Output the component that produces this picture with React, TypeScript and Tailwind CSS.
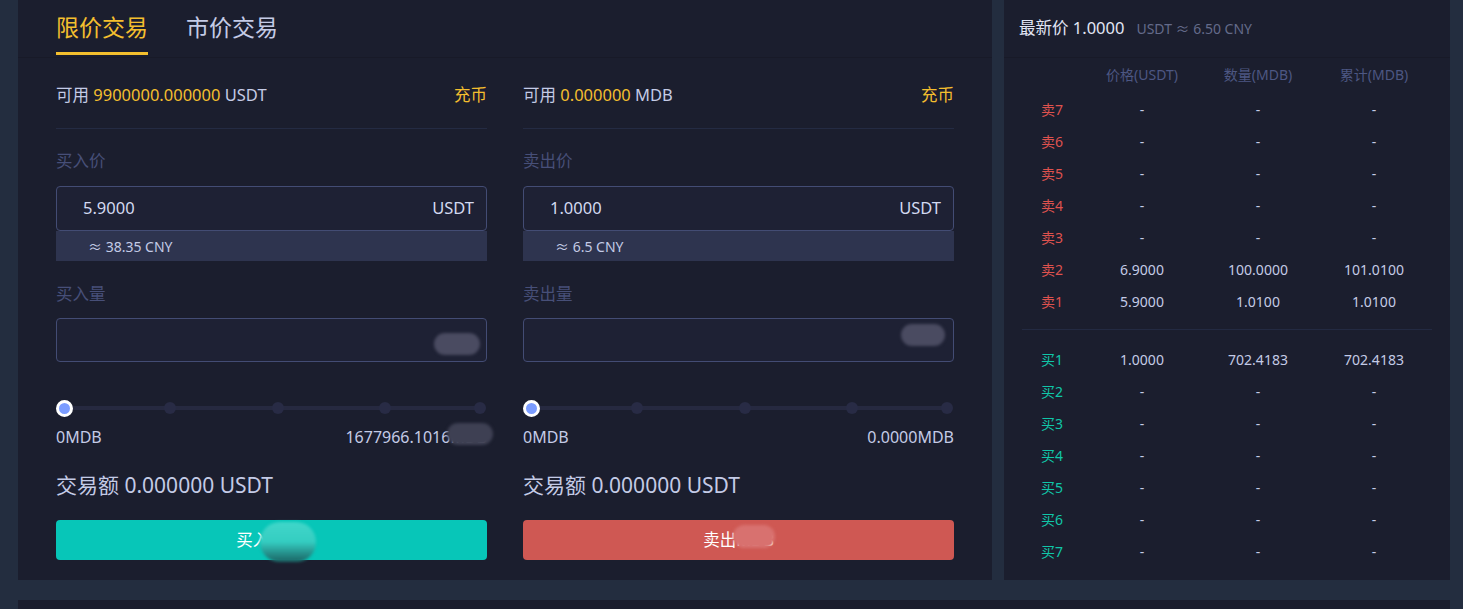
import React from 'react';

const sellRows = [
  { n: 7, price: '-', amount: '-', total: '-' },
  { n: 6, price: '-', amount: '-', total: '-' },
  { n: 5, price: '-', amount: '-', total: '-' },
  { n: 4, price: '-', amount: '-', total: '-' },
  { n: 3, price: '-', amount: '-', total: '-' },
  { n: 2, price: '6.9000', amount: '100.0000', total: '101.0100' },
  { n: 1, price: '5.9000', amount: '1.0100', total: '1.0100' },
];

const buyRows = [
  { n: 1, price: '1.0000', amount: '702.4183', total: '702.4183' },
  { n: 2, price: '-', amount: '-', total: '-' },
  { n: 3, price: '-', amount: '-', total: '-' },
  { n: 4, price: '-', amount: '-', total: '-' },
  { n: 5, price: '-', amount: '-', total: '-' },
  { n: 6, price: '-', amount: '-', total: '-' },
  { n: 7, price: '-', amount: '-', total: '-' },
];

// mosaic blur left over in the screenshot
function Blob({ className }: { className: string }) {
  return <div className={`absolute rounded-full blur-[1.5px] ${className}`} />;
}

function Slider() {
  return (
    <div className="relative h-[16px]">
      <div className="absolute left-[8px] right-[7px] top-[6px] h-[4px] bg-[#262940]" />
      <div className="absolute left-[25%] top-[2px] w-[12px] h-[12px] rounded-full bg-[#282b45]" />
      <div className="absolute left-[50%] top-[2px] w-[12px] h-[12px] rounded-full bg-[#282b45]" />
      <div className="absolute left-[75%] top-[2px] w-[12px] h-[12px] rounded-full bg-[#282b45]" />
      <div className="absolute right-[1px] top-[2px] w-[12px] h-[12px] rounded-full bg-[#282b45]" />
      <div className="absolute left-0 top-0 w-[17px] h-[17px] rounded-full border-[3px] border-white bg-[#7b9cff]" />
    </div>
  );
}

type SideProps = {
  balance: string;
  unit: string;
  priceLabel: string;
  price: string;
  cny: string;
  amountLabel: string;
  max: string;
  buy: boolean;
};

function TradeSide({ balance, unit, priceLabel, price, cny, amountLabel, max, buy }: SideProps) {
  return (
    <div className="flex flex-col">
      <div className="flex justify-between pt-[26px] pb-[22px] border-b border-[#242b43] text-[16.5px] leading-[22px]">
        <div className="text-[#c4cbe6]">
          可用 <span className="text-[#f4bf2e]">{balance}</span> {unit}
        </div>
        <div className="text-[#f4bf2e]">充币</div>
      </div>

      <div className="mt-[21px] text-[16.5px] leading-[22px] text-[#474f78]">{priceLabel}</div>
      <div className="mt-[14px] h-[45px] flex items-center justify-between pl-[26px] pr-[12px] rounded-[4px] border border-[#434c74] bg-[#1e2134] text-[16.5px] text-[#d3d9f0]">
        <span>{price}</span>
        <span>USDT</span>
      </div>
      <div className="h-[30px] flex items-center pl-[32px] bg-[#2e344f] text-[14px] text-[#c4cbe6]">≈ {cny} CNY</div>

      <div className="mt-[22px] text-[16.5px] leading-[22px] text-[#474f78]">{amountLabel}</div>
      <div className="relative mt-[13px] h-[44px] rounded-[4px] border border-[#434c74] bg-[#1e2134]">
        <Blob className={buy ? 'right-[6px] top-[14px] w-[46px] h-[22px] bg-[#4a4b61]' : 'right-[8px] top-[5px] w-[44px] h-[22px] bg-[#4a4b61]'} />
      </div>

      <div className="mt-[38px]">
        <Slider />
      </div>
      <div className="relative mt-[10px] flex justify-between text-[16px] leading-[22px] text-[#c4cbe6]">
        <span>0MDB</span>
        <span>{max}</span>
        {buy && <Blob className="-right-[6px] top-[-3px] w-[46px] h-[22px] bg-[#3e4053]" />}
      </div>

      <div className="mt-[23px] text-[21px] leading-[28px] text-[#c4cbe6]">交易额 0.000000 USDT</div>

      <div
        className={`relative mt-[21px] h-[40px] rounded-[4px] flex items-center justify-center text-[16.5px] text-white ${
          buy ? 'bg-[#07c6b8]' : 'bg-[#cf5853]'
        }`}
      >
        {buy ? '买入MDB' : '卖出MDB'}
        {buy ? (
          <Blob className="left-[204px] top-[2px] w-[56px] h-[40px] bg-gradient-to-b from-[#40d6c9] via-[#34cdc1] to-[#1a6464]" />
        ) : (
          <Blob className="left-[210px] top-[5px] w-[42px] h-[23px] bg-[#d8716f]" />
        )}
      </div>
    </div>
  );
}

function BookRow({ label, color, price, amount, total }: { label: string; color: string; price: string; amount: string; total: string }) {
  return (
    <div className="grid grid-cols-[62px_116px_116px_116px] h-[32px] items-center text-[14px]">
      <span className={`pl-[19px] ${color}`}>{label}</span>
      <span className="text-center text-[#c4cbe6]">{price}</span>
      <span className="text-center text-[#c4cbe6]">{amount}</span>
      <span className="text-center text-[#c4cbe6]">{total}</span>
    </div>
  );
}

export default function App() {
  return (
    <div className="w-[1463px] h-[609px] overflow-hidden bg-[#232d3f] pl-[18px] pr-[13px] font-['Noto_Sans','Noto_Sans_CJK_SC',sans-serif]">
      <div className="flex gap-[12px] h-[580px]">
        <div className="flex-1 bg-[#1b1e2e] flex flex-col">
          <div className="h-[58px] flex items-end gap-[38px] px-[38px] pb-[2px] border-b border-[#181a28]">
            <div className="flex flex-col">
              <span className="text-[23px] leading-[30px] text-[#f4bf2e]">限价交易</span>
              <div className="mt-[10px] h-[3px] bg-[#f4bf2e]" />
            </div>
            <div className="flex flex-col">
              <span className="text-[23px] leading-[30px] text-[#c4cbe6]">市价交易</span>
              <div className="mt-[10px] h-[3px]" />
            </div>
          </div>
          <div className="grid grid-cols-2 gap-[36px] px-[38px]">
            <TradeSide
              balance="9900000.000000"
              unit="USDT"
              priceLabel="买入价"
              price="5.9000"
              cny="38.35"
              amountLabel="买入量"
              max="1677966.1016MDB"
              buy
            />
            <TradeSide
              balance="0.000000"
              unit="MDB"
              priceLabel="卖出价"
              price="1.0000"
              cny="6.5"
              amountLabel="卖出量"
              max="0.0000MDB"
              buy={false}
            />
          </div>
        </div>

        <div className="w-[446px] bg-[#1b1e2e] flex flex-col">
          <div className="h-[58px] flex items-center pl-[15px] border-b border-[#181a28]">
            <span className="text-[16.5px] text-[#e2e6f5]">最新价 1.0000</span>
            <span className="ml-[12px] text-[14px] text-[#646b8a]">USDT ≈ 6.50 CNY</span>
          </div>
          <div className="px-[18px]">
            <div className="grid grid-cols-[62px_116px_116px_116px] h-[32px] items-center text-[14px] text-[#4d5783]">
              <span />
              <span className="text-center">价格(USDT)</span>
              <span className="text-center">数量(MDB)</span>
              <span className="text-center">累计(MDB)</span>
            </div>
            <div className="mt-[3px]">
              {sellRows.map((r) => (
                <BookRow key={r.n} label={`卖${r.n}`} color="text-[#de524e]" price={r.price} amount={r.amount} total={r.total} />
              ))}
            </div>
            <div className="mt-[12px] h-px bg-[#232a42]" />
            <div className="mt-[13px]">
              {buyRows.map((r) => (
                <BookRow key={r.n} label={`买${r.n}`} color="text-[#10c6a8]" price={r.price} amount={r.amount} total={r.total} />
              ))}
            </div>
          </div>
        </div>
      </div>
      <div className="mt-[20px] h-[40px] bg-[#1b1e2e]" />
    </div>
  );
}
